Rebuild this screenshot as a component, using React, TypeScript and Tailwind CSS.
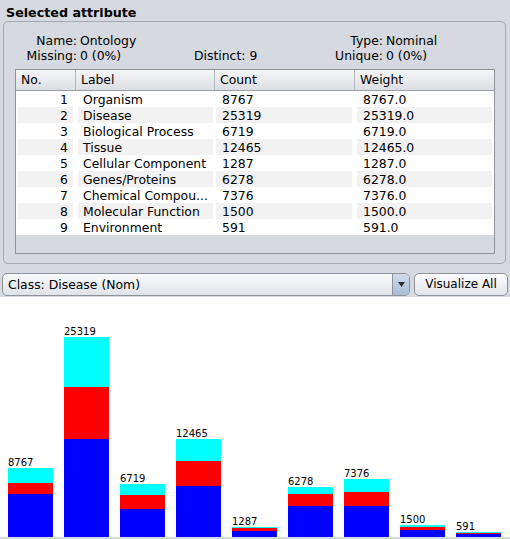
import React from 'react';

const rows = [
  { no: 1, label: 'Organism', count: 8767 },
  { no: 2, label: 'Disease', count: 25319 },
  { no: 3, label: 'Biological Process', count: 6719 },
  { no: 4, label: 'Tissue', count: 12465 },
  { no: 5, label: 'Cellular Component', count: 1287 },
  { no: 6, label: 'Genes/Proteins', count: 6278 },
  { no: 7, label: 'Chemical Compou...', count: 7376 },
  { no: 8, label: 'Molecular Function', count: 1500 },
  { no: 9, label: 'Environment', count: 591 },
];

// stacked segments in px: cyan, red, blue
const bars = [
  { count: 8767, seg: [15, 11, 43] },
  { count: 25319, seg: [50, 52, 98] },
  { count: 6719, seg: [11, 14, 28] },
  { count: 12465, seg: [22, 25, 51] },
  { count: 1287, seg: [1, 3, 6] },
  { count: 6278, seg: [7, 12, 31] },
  { count: 7376, seg: [13, 14, 31] },
  { count: 1500, seg: [2, 3, 7] },
  { count: 591, seg: [1, 1, 3] },
];

const InfoRow: React.FC<{ a: string; av: string; mid?: string; c: string; cv: string }> = ({ a, av, mid, c, cv }) => (
  <div className="grid grid-cols-[73px_117px_130px_59px_1fr] h-[15px] leading-[15px]">
    <div className="text-right">{a}</div>
    <div className="pl-[3px]">{av}</div>
    <div>{mid}</div>
    <div className="text-right">{c}</div>
    <div className="pl-[3px]">{cv}</div>
  </div>
);

export default function App() {
  return (
    <div className="w-[510px] h-[539px] overflow-hidden bg-[#d6d9df] text-[12.4px] text-black [font-family:'DejaVu_Sans',sans-serif] flex flex-col">
      <div className="h-[21px] pt-[5px] pl-[6px] leading-[15px] text-[12.7px] font-bold">Selected attribute</div>

      <div className="ml-[3px] w-[503px] h-[243px] border border-[#a4a8b0] rounded-[5px] pt-[11px]">
        <InfoRow a="Name:" av="Ontology" c="Type:" cv="Nominal" />
        <InfoRow a="Missing:" av="0 (0%)" mid="Distinct: 9" c="Unique:" cv="0 (0%)" />

        <div className="mt-[6px] ml-[11px] w-[480px] h-[185px] border border-[#8e929a] bg-[#d6d9df] flex flex-col">
          <div className="h-[21px] shrink-0 flex border-b border-[#9a9ea6] bg-gradient-to-b from-[#f5f6f8] to-[#dcdee3] leading-[20px]">
            <div className="w-[59px] pl-[5px]">No.</div>
            <div className="w-[139px] pl-[5px] border-l border-[#b4b8bf]">Label</div>
            <div className="w-[140px] pl-[5px] border-l border-[#b4b8bf]">Count</div>
            <div className="w-[140px] pl-[5px] border-l border-[#b4b8bf]">Weight</div>
          </div>
          {rows.map((r, i) => {
            const bg = i % 2 === 1 ? 'bg-[#f2f2f2]' : 'bg-white';
            return (
              <div key={r.no} className="h-[16px] shrink-0 flex bg-white leading-[17px]">
                <div className="w-[59px] px-[2px]">
                  <div className={`h-full text-right pr-[5px] ${bg}`}>{r.no}</div>
                </div>
                <div className="w-[139px] pl-[3px] pr-[1px]">
                  <div className={`h-full pl-[5px] whitespace-nowrap ${bg}`}>{r.label}</div>
                </div>
                <div className="w-[140px] pl-[2px] pr-[2px]">
                  <div className={`h-full pl-[6px] ${bg}`}>{r.count}</div>
                </div>
                <div className="w-[140px] pl-[3px] pr-[2px]">
                  <div className={`h-full pl-[6px] ${bg}`}>{r.count}.0</div>
                </div>
              </div>
            );
          })}
        </div>
      </div>

      <div className="mt-[9px] h-[23px] flex pl-[2px] gap-[4px]">
        <div className="w-[408px] h-full flex border border-[#8e929a] rounded-[5px] overflow-hidden bg-gradient-to-b from-[#fbfbfc] to-[#dfe2e8]">
          <div className="flex-1 pl-[5px] leading-[21px]">Class: Disease (Nom)</div>
          <div className="w-[17px] h-full border-l border-[#8e929a] bg-gradient-to-b from-[#cfdceb] to-[#a9bdd5] flex items-center justify-center">
            <svg width="7" height="5" viewBox="0 0 7 5">
              <path d="M0 0 H7 L3.5 5 Z" fill="#2a2f38" />
            </svg>
          </div>
        </div>
        <div className="w-[94px] h-full border border-[#8e929a] rounded-[5px] bg-gradient-to-b from-[#fdfdfe] to-[#e0e3e8] text-center leading-[21px] text-[12px]">
          Visualize All
        </div>
      </div>

      <div className="mt-[1px] h-[240px] bg-white flex items-end pl-[8px] gap-[11px]">
        {bars.map((b) => (
          <div key={b.count} className="w-[45px] flex flex-col">
            <div className="text-[10px] leading-[10px] whitespace-nowrap">{b.count}</div>
            <div className="bg-[#00ffff]" style={{ height: b.seg[0] }} />
            <div className="bg-[#ff0000]" style={{ height: b.seg[1] }} />
            <div className="bg-[#0000ff]" style={{ height: b.seg[2] }} />
          </div>
        ))}
      </div>
    </div>
  );
}
